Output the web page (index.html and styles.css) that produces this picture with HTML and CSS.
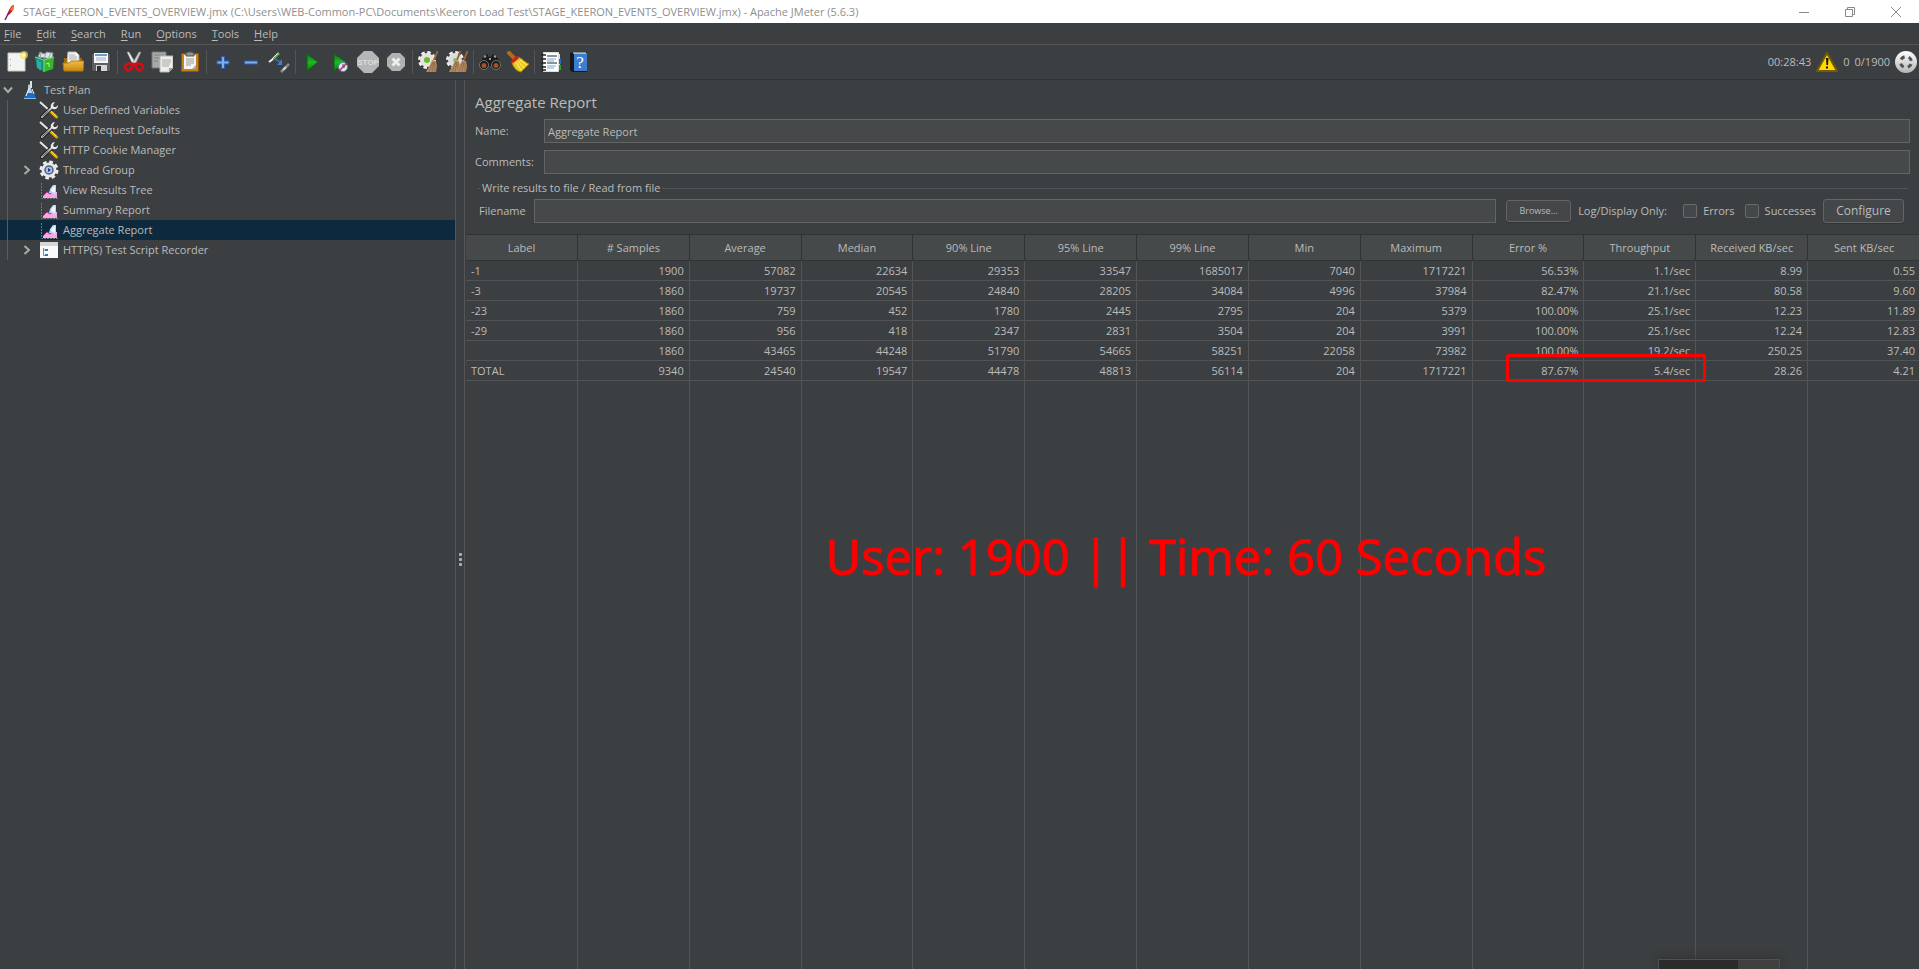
FILE: index.html
```html
<!DOCTYPE html>
<html lang="en">
<head>
<meta charset="utf-8">
<title>STAGE_KEERON_EVENTS_OVERVIEW.jmx - Apache JMeter (5.6.3)</title>
<link rel="stylesheet" href="styles.css">
</head>
<body>
<svg class="defs" aria-hidden="true">
  <defs>
    <linearGradient id="silver" x1="0" y1="0" x2="0" y2="1"><stop offset="0" stop-color="#fff"/><stop offset="1" stop-color="#b4b4b4"/></linearGradient>
    <linearGradient id="green" x1="0" y1="0" x2="0" y2="1"><stop offset="0" stop-color="#0a7d14"/><stop offset=".5" stop-color="#23b52b"/><stop offset="1" stop-color="#067a10"/></linearGradient>
    <linearGradient id="orange" x1="0" y1="0" x2="0" y2="1"><stop offset="0" stop-color="#f3bb49"/><stop offset="1" stop-color="#c88812"/></linearGradient>
    <symbol id="wrench" viewBox="0 0 20 20">
      <path d="M1 2l10 9" stroke="#e4e4e4" stroke-width="2"/>
      <path d="M11.500 11.500l6 5.500" stroke="#e8a800" stroke-width="3" stroke-linecap="round"/>
      <path d="M11 10l6 6" stroke="#ffe04a" stroke-width="1"/>
      <path d="M3 17L13 7.500" stroke="#1f2020" stroke-width="4" stroke-linecap="round"/>
      <path d="M3 17L13 7.500" stroke="#c9cac8" stroke-width="2" stroke-linecap="round"/>
      <path d="M3.500 16.500l6-5.500" stroke="#444" stroke-width="1"/>
      <path d="M12 8c-1-3 1-6 4-6l-2 3 1 2 2 0 2-2c0 4-3 5-5 4z" fill="#e9e9e7"/>
    </symbol>
    <symbol id="graph" viewBox="0 0 20 20">
      <path d="M2.500 3v15.500H19" fill="none" stroke="#74777a" stroke-dasharray="2 1"/>
      <path d="M4 18v-2l4-4 3 2 3-2 4 0v6z" fill="#f7a8e2"/>
      <path d="M4 16l4-4 3 2 3-2" fill="none" stroke="#b83c96"/>
      <path d="M10 13l1-4 3-4h3V15c-3 0-3-2-7-2z" fill="#b9d4f6"/>
      <path d="M12 11l1-3 3-2v7z" fill="#f1f7ff"/>
    </symbol>
    <symbol id="gear" viewBox="0 0 20 20">
      <circle cx="10" cy="10" r="8" fill="none" stroke="#ededed" stroke-width="3" stroke-dasharray="3.600 2.683"/>
      <circle cx="10" cy="10" r="7.500" fill="#e6e7e9"/>
    </symbol>
    <symbol id="broom" viewBox="0 0 22 22">
      <path d="M19.500 0l-3.500 9" stroke="#9b6430" stroke-width="2"/>
      <path d="M14 9l4 1 1 5-1 6H8c2-4 4-6 6-12z" fill="#b58a60"/>
      <path d="M15 11l-4 10M16 11l-2 10M17 12l0 9" stroke="#8d6540" fill="none" stroke-width=".8"/>
    </symbol>
    <symbol id="closed" viewBox="0 0 10 10"><path d="M2.500 1l4.500 4-4.500 4" fill="none" stroke="#a9abac" stroke-width="2"/></symbol>
  </defs>
</svg>

<div class="app">
  <header class="titlebar">
    <svg class="feather" viewBox="0 0 20 20"><path d="M13 3c-3 2-5 6-6 11l3-2c3-3 4-6 4-9z" fill="#c3202f"/><path d="M14 3c-2 1-3 3-4 5l3 1c1-2 1-4 1-6z" fill="#ef7b27"/><path d="M9 10l-2 4-2 4" stroke="#7b2264" stroke-width="1.500" fill="none"/></svg>
    <span class="caption">STAGE_KEERON_EVENTS_OVERVIEW.jmx (C:\Users\WEB-Common-PC\Documents\Keeron Load Test\STAGE_KEERON_EVENTS_OVERVIEW.jmx) - Apache JMeter (5.6.3)</span>
    <div class="window-buttons">
      <button aria-label="Minimize"><svg viewBox="0 0 12 12"><path d="M1 6.500h10"/></svg></button>
      <button aria-label="Restore"><svg viewBox="0 0 12 12"><path d="M1.500 3.500h7v7h-7zM3.500 3.500v-2h7v7h-2"/></svg></button>
      <button aria-label="Close"><svg viewBox="0 0 12 12"><path d="M1 1l10 10M11 1L1 11"/></svg></button>
    </div>
  </header>

  <nav class="menubar">
    <button><u>F</u>ile</button><button><u>E</u>dit</button><button><u>S</u>earch</button><button><u>R</u>un</button><button><u>O</u>ptions</button><button><u>T</u>ools</button><button><u>H</u>elp</button>
  </nav>

  <div class="toolbar">
    <button aria-label="New"><svg viewBox="0 0 22 22"><path d="M2 2h17v18H2z" fill="#f3f3f1" stroke="#c9c9c6"/><path d="M4.500 8v1M4.500 14v1" stroke="#999"/><circle cx="18" cy="4" r="4" fill="#f5e24a" opacity=".65"/><circle cx="18" cy="4" r="2" fill="#fffbb0"/></svg></button>
    <button aria-label="Templates"><svg viewBox="0 0 22 22"><path d="M4 6l2-5 4 2 3-2 6 1-1 6z" fill="#dbe5e4" stroke="#829392"/><path d="M7 2l-1 5M12 2l-2 6M17 2l-3 6" stroke="#8aa"/><path d="M1 6l9 3v12l-7-4z" fill="#119487"/><path d="M10 9l10-3-1 12-9 3z" fill="#37b62c"/><path d="M1 6l9 3 10-3M10 9v12" stroke="#80db71" fill="none"/><path d="M4 9v8M6 11v8" stroke="#57c4bb"/><path d="M12 13l3-1v4" stroke="#b1f09c" fill="none"/></svg></button>
    <button aria-label="Open"><svg viewBox="0 0 22 22"><path d="M2 7h18v13H2z" fill="#9d6a09"/><path d="M6 1h8l3 3v10H5z" fill="#f6f6f4" stroke="#b9b9b9"/><path d="M7 4h6M7 6h8M7 8h8" stroke="#aaa"/><path d="M1 12h6l2-2h13l-1 10H2z" fill="url(#orange)" stroke="#b27a0a"/></svg></button>
    <button aria-label="Save"><svg viewBox="0 0 22 22"><path d="M1.500 2.500h19v18h-17l-2-2z" fill="#5d6061" stroke="#343637"/><path d="M4 2h14v10H4z" fill="#f5f8fa"/><path d="M5 3h12v2H5z" fill="#6c9fc7"/><path d="M6 7h10M6 9h10" stroke="#aab"/><path d="M6 14h11v6H6z" fill="#d5d7d7"/><path d="M7 15h4v5H7z" fill="#303334"/></svg></button>
    <i class="sep"></i>
    <button aria-label="Cut"><svg viewBox="0 0 22 22"><path d="M4 1l2 0 7 12-3 1z" fill="#f1f1f1" stroke="#888" stroke-width=".6"/><path d="M18 1l-2 0-7 12 3 1z" fill="#d2d2d2" stroke="#888" stroke-width=".6"/><path d="M10 13c-7-2-9 2-7 5s6 1 7-5zM12 13c7-2 9 2 7 5s-6 1-7-5z" fill="none" stroke="#d90c13" stroke-width="2.500"/></svg></button>
    <button aria-label="Copy"><svg viewBox="0 0 22 22"><path d="M1 1h14v16H1z" fill="#a8aaaa" stroke="#777"/><path d="M3 4h10M3 7h6M3 10h4" stroke="#808282"/><path d="M9 5h13v12l-4 4H9z" fill="#eeeeec" stroke="#b6b6b4"/><path d="M11 9h9M11 11h9M11 13h8M11 15h7" stroke="#a8a8a6"/><path d="M22 17h-4v4z" fill="#999"/></svg></button>
    <button aria-label="Paste"><svg viewBox="0 0 22 22"><path d="M2.500 2.500h17v18h-17z" fill="#c58225" stroke="#8d5510"/><path d="M5 4h12v14H5z" fill="#f4f4f2"/><path d="M7 3c0-2 2-1 2-2h4c0 1 2 0 2 2v2H7z" fill="#91938e" stroke="#50534f"/><path d="M7 8h8M7 10h8M7 12h8M7 14h5" stroke="#999"/><path d="M17 14l-4 4h4z" fill="#aaa"/></svg></button>
    <i class="sep"></i>
    <button aria-label="Expand all"><svg viewBox="0 0 22 22"><path d="M11 5v13M4.500 11.500h13" stroke="#2c5bb0" stroke-width="4"/><path d="M11 6v11M5.500 11.500h11" stroke="#7db0f1" stroke-width="2"/></svg></button>
    <button aria-label="Collapse all"><svg viewBox="0 0 22 22"><path d="M4 11.500h14" stroke="#2c5bb0" stroke-width="4"/><path d="M5 11.500h12" stroke="#7db0f1" stroke-width="2"/></svg></button>
    <button aria-label="Toggle"><svg viewBox="0 0 22 22"><path d="M1 11l4-3" stroke="#eef0ed" stroke-width="2"/><path d="M5 8l6-6" stroke="#68b052" stroke-width="2.500"/><path d="M4 8l6-6" stroke="#dfeeda"/><path d="M13 21l8-8" stroke="#8a8c8a" stroke-width="2.500"/><path d="M15 19l3-3" stroke="#cfd8cb" stroke-width="2"/><path d="M7 8l5 3" stroke="#2e6fc6" stroke-width="1.500"/><path d="M14 8v6H9z" fill="#3b80d8"/></svg></button>
    <i class="sep"></i>
    <button aria-label="Start"><svg viewBox="0 0 22 22"><path d="M6 3l11 8-11 9z" fill="url(#green)" stroke="#08670d"/></svg></button>
    <button aria-label="Start no pauses"><svg viewBox="0 0 22 22"><path d="M5 3l12 8-12 9z" fill="url(#green)" stroke="#08670d"/><circle cx="14" cy="16" r="4.500" fill="#dce9f7" stroke="#5984b5"/><path d="M14 13v3h2" stroke="#446" fill="none"/><path d="M10 20l8-8" stroke="#c62c38" stroke-width="1.500"/></svg></button>
    <button aria-label="Stop"><svg class="stop" viewBox="0 0 22 22"><path d="M7 0h8l7 7v8l-7 7H7l-7-7V7z" fill="#b5b6b6"/><text x="11" y="14" text-anchor="middle">STOP</text></svg></button>
    <button aria-label="Shutdown"><svg viewBox="0 0 22 22"><path d="M7 2h8l5 5v8l-5 5H7l-5-5V7z" fill="#b0b1b1"/><path d="M7.500 7.500l7 7M14.500 7.500l-7 7" stroke="#eee" stroke-width="3"/></svg></button>
    <i class="sep"></i>
    <button aria-label="Clear"><svg viewBox="0 0 22 22"><circle cx="9" cy="9" r="7.500" fill="none" stroke="#f2f2f2" stroke-width="3" stroke-dasharray="3.400 2.490"/><circle cx="9" cy="9" r="7" fill="#e3e4e2"/><circle cx="9" cy="9" r="3" fill="#68bb27"/><use href="#broom"/></svg></button>
    <button aria-label="Clear all"><svg viewBox="0 0 22 22"><circle cx="9" cy="9" r="7.500" fill="none" stroke="#f2f2f2" stroke-width="3" stroke-dasharray="3.400 2.490"/><circle cx="9" cy="9" r="7" fill="#dcdddc"/><circle cx="9" cy="9" r="2" fill="#8fbf6a"/><use href="#broom" x="-5"/><use href="#broom" x="2"/></svg></button>
    <i class="sep"></i>
    <button aria-label="Search"><svg viewBox="0 0 22 22"><path d="M4 6l4-3 2 3h2l2-3 4 3 4 9H0z" fill="#1c1c1c"/><path d="M5 6l2-1M15 5l2 1M10 8h2" stroke="#999" stroke-width="2"/><circle cx="5" cy="14" r="4.500" fill="#181818" stroke="#777"/><circle cx="17" cy="14" r="4.500" fill="#181818" stroke="#777"/><circle cx="5" cy="14.500" r="2.500" fill="#a65127"/><circle cx="17" cy="14.500" r="2.500" fill="#a65127"/></svg></button>
    <button aria-label="Reset search"><svg viewBox="0 0 22 22"><path d="M2 2l7 7" stroke="#b26c19" stroke-width="4" stroke-linecap="round"/><path d="M5 11l6-5 4 2c3 3 5 4 7 5l-8 8C9 20 6 16 5 11z" fill="#ebca20" stroke="#aa8307"/><path d="M9 11l5 8M11 10l6 7M13 9l7 5" stroke="#fff080"/><path d="M5 11l6-5" stroke="#cf1d22" stroke-width="3"/></svg></button>
    <i class="sep"></i>
    <button aria-label="Function helper"><svg viewBox="0 0 22 22"><path d="M18 3h2v16h-2z" fill="#ddd"/><path d="M19 8h2v5h-2z" fill="#2469cf"/><path d="M19 14h2v5h-2z" fill="#25a62a"/><path d="M3.500 1.500h15v19h-15z" fill="#fff" stroke="#ddd"/><path d="M1 4h5M1 8h5M1 12h5M1 16h5M1 19h5" stroke="#202020" stroke-width="1.500"/><path d="M7 5h10M7 12h10" stroke="#222"/><path d="M7 8h9M7 10h7M7 15h9M7 17h7" stroke="#78a5e4"/></svg></button>
    <button aria-label="Help"><svg class="help" viewBox="0 0 22 22"><path d="M2 2l3-1h14v20H4l-2-2z" fill="#17191c"/><path d="M6 2h13v18H6z" fill="#3d7dd0"/><path d="M5 2h13" stroke="#fff"/><text x="12" y="17" text-anchor="middle">?</text></svg></button>

    <div class="status">
      <span>00:28:43</span>
      <button aria-label="Log errors"><svg viewBox="0 0 22 22"><path d="M11 2l10 18H1z" fill="#ffd800" stroke="#735c00" stroke-width="2" stroke-linejoin="round"/><path d="M10 7h2.500l-.5 7h-1.500zM10 15.500h2v2h-2z" fill="#111"/></svg></button>
      <span>0</span>
      <span>0/1900</span>
      <svg class="lamp" viewBox="0 0 22 22"><circle cx="11" cy="11" r="11" fill="url(#silver)"/><circle cx="11" cy="11" r="5.500" fill="none" stroke="#505254" stroke-width="3" stroke-dasharray="4.300 4.340" stroke-dashoffset="-2.200"/></svg>
    </div>
  </div>

  <main class="workspace">
    <aside class="tree">
      <ul>
        <li class="root"><svg class="arrow" viewBox="0 0 10 10"><path d="M1 2.500l4 4.500 4-4.500" fill="none" stroke="#a9abac" stroke-width="2"/></svg><svg class="icon" viewBox="0 0 20 20"><path d="M8 5l3-1v5l4 10H4L8 10z" fill="#b5cbe2"/><path d="M11 1v7" stroke="#dedede" stroke-width="2"/><path d="M6 13h8l2 6H4z" fill="#176fc8"/><path d="M9 8l-3 8M12 9l2 5" stroke="#f1f7ff"/><path d="M4 18.500h12" stroke="#85b9ec"/></svg>Test Plan</li>
        <li><svg class="icon"><use href="#wrench"/></svg>User Defined Variables</li>
        <li><svg class="icon"><use href="#wrench"/></svg>HTTP Request Defaults</li>
        <li><svg class="icon"><use href="#wrench"/></svg>HTTP Cookie Manager</li>
        <li class="branch"><svg class="arrow"><use href="#closed"/></svg><svg class="icon" viewBox="0 0 20 20"><use href="#gear"/><circle cx="10" cy="10" r="4" fill="#a9c3e8" stroke="#4a5f82" stroke-width="1.500"/><path d="M9 8l3 2-3 2z" fill="#183b76"/></svg>Thread Group</li>
        <li><svg class="icon"><use href="#graph"/></svg>View Results Tree</li>
        <li><svg class="icon"><use href="#graph"/></svg>Summary Report</li>
        <li class="selected"><svg class="icon"><use href="#graph"/></svg>Aggregate Report</li>
        <li class="branch"><svg class="arrow"><use href="#closed"/></svg><svg class="icon" viewBox="0 0 20 20"><path d="M1 2h18v16H1z" fill="#fafafa"/><path d="M1 2h18v4H1z" fill="#d5d6d7"/><path d="M4.500 8v7.500H7M4.500 10H7" stroke="#888" fill="none"/><path d="M6 9h3v2H6zM6 14h3v2H6z" fill="#277bc1"/></svg>HTTP(S) Test Script Recorder</li>
      </ul>
    </aside>
    <div class="splitter"><i></i><i></i><i></i></div>

    <section class="report">
      <div class="form">
        <h1>Aggregate Report</h1>
        <div class="field"><label for="name">Name:</label><input id="name" type="text" value="Aggregate Report"></div>
        <div class="field"><label for="comments">Comments:</label><input id="comments" type="text"></div>
        <div class="group">
          <div class="legend">Write results to file / Read from file</div>
          <div class="file-row">
            <label for="filename">Filename</label><input id="filename" type="text">
            <button class="browse">Browse...</button>
            <span class="only">Log/Display Only:</span>
            <label class="check"><input type="checkbox">Errors</label>
            <label class="check"><input type="checkbox">Successes</label>
            <button class="configure">Configure</button>
          </div>
        </div>
      </div>
      <div class="results">
        <table>
          <thead><tr><th>Label</th><th># Samples</th><th>Average</th><th>Median</th><th>90% Line</th><th>95% Line</th><th>99% Line</th><th>Min</th><th>Maximum</th><th>Error %</th><th>Throughput</th><th>Received KB/sec</th><th>Sent KB/sec</th></tr></thead>
          <tbody>
            <tr><td>-1</td><td>1900</td><td>57082</td><td>22634</td><td>29353</td><td>33547</td><td>1685017</td><td>7040</td><td>1717221</td><td>56.53%</td><td>1.1/sec</td><td>8.99</td><td>0.55</td></tr>
            <tr><td>-3</td><td>1860</td><td>19737</td><td>20545</td><td>24840</td><td>28205</td><td>34084</td><td>4996</td><td>37984</td><td>82.47%</td><td>21.1/sec</td><td>80.58</td><td>9.60</td></tr>
            <tr><td>-23</td><td>1860</td><td>759</td><td>452</td><td>1780</td><td>2445</td><td>2795</td><td>204</td><td>5379</td><td>100.00%</td><td>25.1/sec</td><td>12.23</td><td>11.89</td></tr>
            <tr><td>-29</td><td>1860</td><td>956</td><td>418</td><td>2347</td><td>2831</td><td>3504</td><td>204</td><td>3991</td><td>100.00%</td><td>25.1/sec</td><td>12.24</td><td>12.83</td></tr>
            <tr><td></td><td>1860</td><td>43465</td><td>44248</td><td>51790</td><td>54665</td><td>58251</td><td>22058</td><td>73982</td><td>100.00%</td><td>19.2/sec</td><td>250.25</td><td>37.40</td></tr>
            <tr><td>TOTAL</td><td>9340</td><td>24540</td><td>19547</td><td>44478</td><td>48813</td><td>56114</td><td>204</td><td>1717221</td><td>87.67%</td><td>5.4/sec</td><td>28.26</td><td>4.21</td></tr>
            <tr class="filler"><td></td><td></td><td></td><td></td><td></td><td></td><td></td><td></td><td></td><td></td><td></td><td></td><td></td></tr>
          </tbody>
        </table>
        <div class="highlight"></div>
        <p class="note">User: 1900 || Time: 60 Seconds</p>
        <div class="popup"></div>
      </div>
    </section>
  </main>
</div>
</body>
</html>
```
FILE: styles.css
```css
:root {
  --bg: #3c3f41;
  --field: #45494a;
  --line: #515355;
  --edge: #646464;
  --dark: #313435;
  --text: #bbbbbb;
}
* { box-sizing: border-box; }
body {
  margin: 0;
  background: var(--bg);
  color: var(--text);
  font: 11px/16px "Open Sans", "Noto Sans", sans-serif;
}
button, input { font: inherit; color: inherit; margin: 0; }
button { padding: 0; border: 0; background: none; }
svg { display: block; flex: none; }
.defs { position: absolute; width: 0; height: 0; }
.app { display: flex; flex-direction: column; height: 100vh; overflow: hidden; }

.titlebar { display: flex; align-items: center; height: 23px; background: #fff; color: #8f8f8f; }
.feather { width: 20px; height: 20px; }
.caption { margin-left: 3px; white-space: nowrap; }
.window-buttons { display: flex; margin-left: auto; }
.window-buttons button { display: grid; place-items: center; width: 46px; height: 22px; }
.window-buttons svg { width: 12px; height: 12px; fill: none; stroke: #888; }

.menubar { display: flex; gap: 15px; height: 22px; padding: 0 4px; border-bottom: 1px solid #555; }
.menubar u { text-underline-offset: 2px; }

.toolbar { display: flex; align-items: center; height: 35px; padding-left: 3px; border-bottom: 1px solid var(--dark); }
.toolbar > button { display: grid; place-items: center; width: 28px; height: 34px; }
.toolbar svg { width: 22px; height: 22px; }
.sep { width: 1px; height: 24px; margin: 0 2px; background: #555; }
.stop text { font: bold 8px "Liberation Sans", sans-serif; fill: #ddd; }
.help text { font: 17px "Liberation Serif", serif; fill: #fff; }
.status { display: flex; align-items: center; gap: 5px; margin-left: auto; padding-right: 2px; }

.workspace { display: flex; flex: 1; min-height: 0; }
.tree { flex: none; width: 455px; }
.tree ul { position: relative; margin: 0; padding: 0; list-style: none; }
.tree ul::before { content: ""; position: absolute; left: 7px; top: 20px; bottom: 0; width: 1px; background: #5a5d5f; }
.tree li { display: flex; align-items: center; height: 20px; padding-left: 39px; line-height: 20px; }
.tree .root { padding-left: 3px; }
.tree .branch { padding-left: 22px; }
.tree .selected { background: #0d293e; }
.tree .icon { width: 20px; height: 20px; margin-right: 4px; }
.tree .arrow { width: 10px; height: 10px; margin-right: 7px; }
.splitter { display: flex; flex: none; flex-direction: column; align-items: center; justify-content: center; gap: 2px; width: 10px; padding-top: 70px; border: solid #555; border-width: 0 1px; }
.splitter i { width: 3px; height: 3px; border-radius: 1px; background: #afb1b3; }

.report { display: flex; flex: 1; flex-direction: column; min-width: 0; }
.form { padding: 12px 9px 11px 10px; }
h1 { margin: 0 0 7px; font-size: 15px; font-weight: 400; line-height: 20px; }
.field { display: flex; align-items: center; margin-bottom: 7px; }
.field label { width: 69px; }
input[type="text"] { flex: 1; min-width: 0; height: 24px; padding: 0 3px; border: 1px solid var(--edge); background: var(--field); outline: 0; }
.legend { display: flex; align-items: center; gap: 2px; height: 14px; margin: 0 2px 4px; }
.legend::before, .legend::after { content: ""; width: 3px; height: 1px; background: var(--line); }
.legend::after { flex: 1; }
.file-row { display: flex; align-items: center; padding: 0 6px 0 4px; }
.file-row > label:first-child { width: 55px; }
.browse, .configure { border: 1px solid var(--edge); border-radius: 3px; background: #434749; box-shadow: 0 1px 1px #333; }
.browse { width: 65px; height: 22px; margin: 0 7px 0 10px; font-size: 9px; }
.configure { width: 81px; height: 24px; font-size: 12px; }
.only { width: 105px; }
.check { display: flex; align-items: center; margin-right: 7px; }
.check + .check { margin-left: 3px; }
.check input { appearance: none; width: 14px; height: 14px; margin-right: 6px; border: 1px solid #6b6b6b; border-radius: 2px; background: #43494a; }

.results { position: relative; flex: 1; min-height: 0; padding-left: 1px; }
table { width: calc(100% + 1px); height: 100%; table-layout: fixed; border-collapse: separate; border-spacing: 0; }
th { height: 27px; padding: 0; border: solid var(--dark); border-width: 1px 1px 1px 0; background: var(--field); font-weight: 400; }
td { height: 20px; padding: 0 5px; border: solid var(--line); border-width: 0 1px 1px 0; line-height: 19px; text-align: right; }
td:first-child { text-align: left; }
th:last-child, td:last-child { border-right: 0; }
.filler td { height: auto; border-bottom: 0; }
.highlight { position: absolute; top: 120px; right: 213px; width: 200px; height: 28px; border: 3px solid #f00; border-radius: 2px; }
.note { position: absolute; top: 290px; left: 0; width: 100%; margin: 0; padding-right: 12px; color: #f00; font: 49px/64px "Open Sans", "Noto Sans", sans-serif; -webkit-text-stroke: 1px #f00; text-align: center; }
.popup { position: absolute; right: 139px; bottom: 0; width: 122px; height: 10px; border: solid #505050; border-width: 1px 1px 0; background: linear-gradient(90deg, #2b2b2b 66%, #404040 66%); box-shadow: 0 0 10px #2229; }
```
